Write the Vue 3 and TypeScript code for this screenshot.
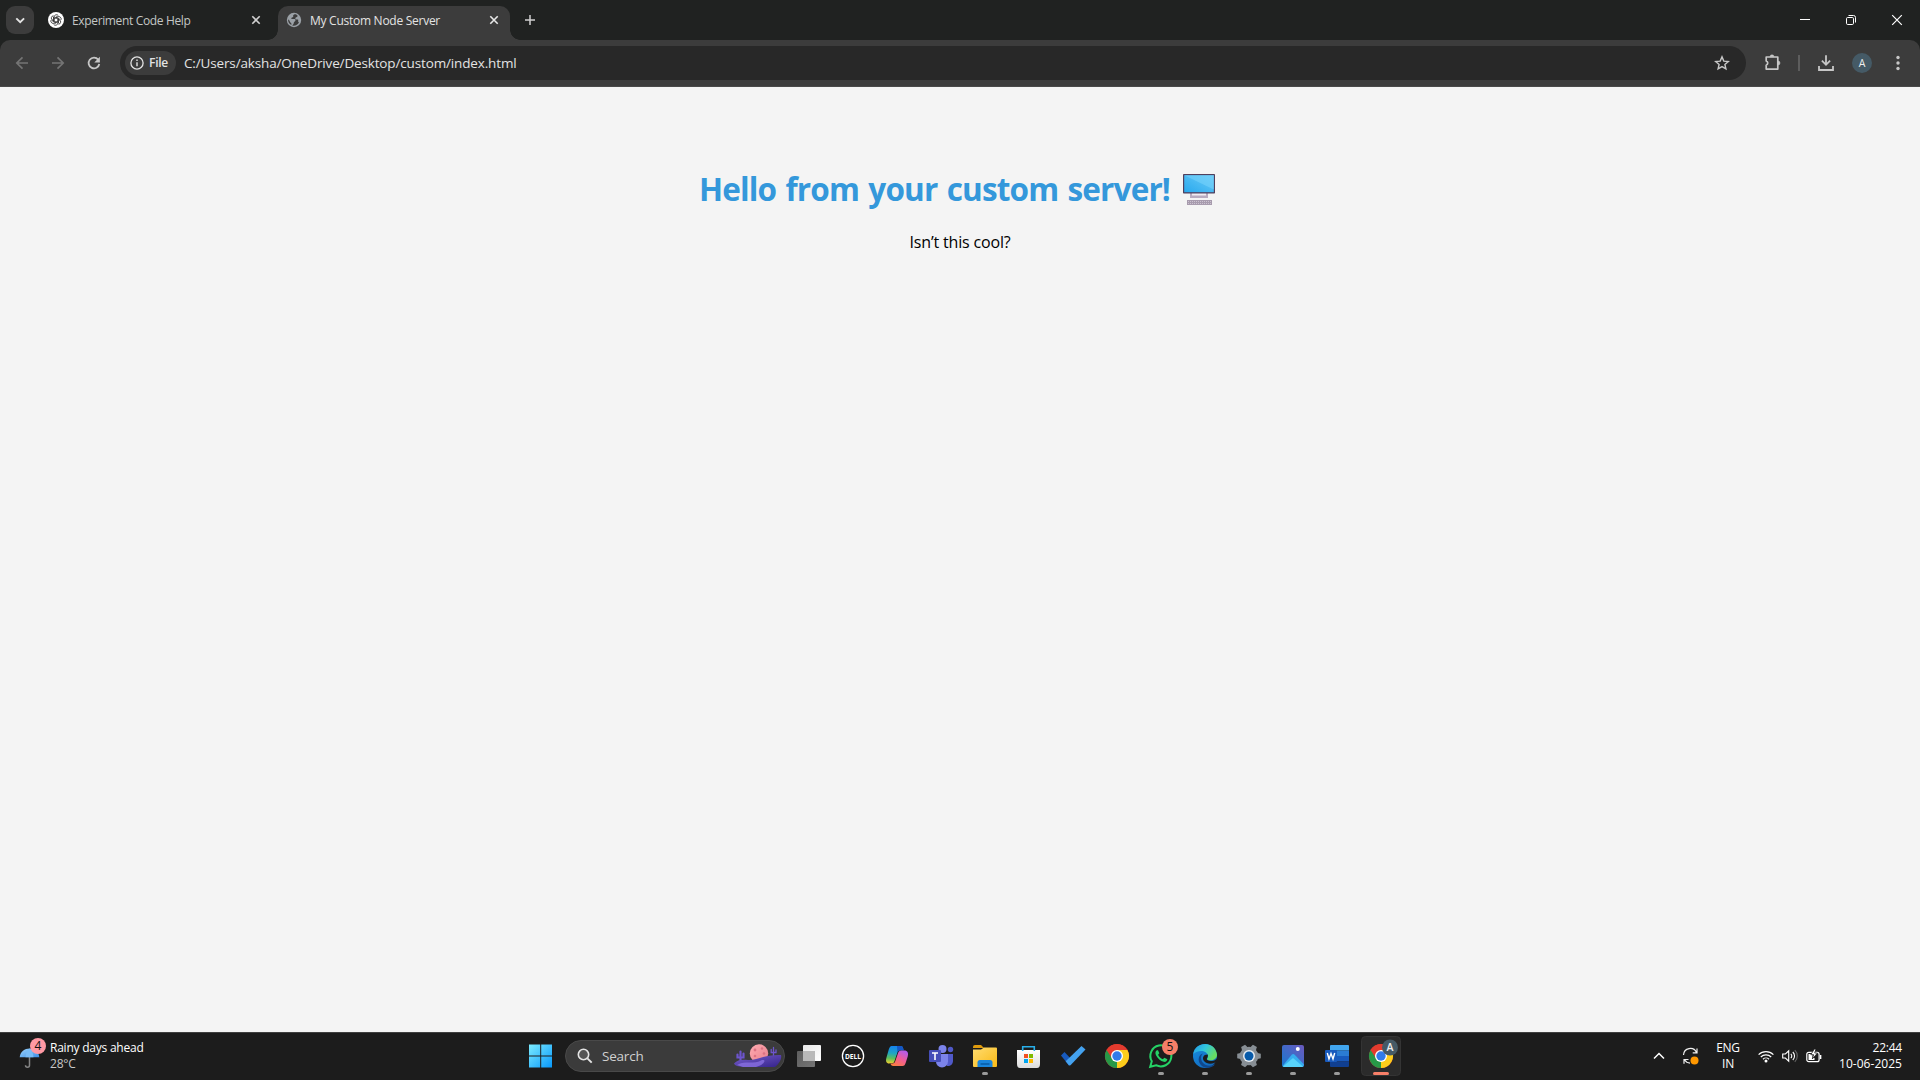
<script setup lang="ts">
import type { Directive } from 'vue'

// Tracks a single line of text out (or in) so that it fills the given width.
const vFit: Directive<HTMLElement, number> = {
  mounted(el, binding) {
    const apply = () => {
      el.style.letterSpacing = '0px'
      const count = (el.textContent ?? '').trim().length
      const natural = el.getBoundingClientRect().width
      el.style.letterSpacing = `${(binding.value - natural) / count}px`
    }
    apply()
    document.fonts.ready.then(apply)
  },
}

const gearTeeth = [0, 60, 120, 180, 240, 300]
</script>

<template>
  <div class="screen">
    <header class="tabstrip">
      <button class="tabsearch" aria-label="Search tabs">
        <svg width="28" height="28" viewBox="0 0 28 28"><path d="M10.3 12.3l3.9 3.9 3.9-3.9" fill="none" stroke="#e3e3e3" stroke-width="1.9" /></svg>
      </button>
      <div class="tab idle">
        <svg class="fav" width="16" height="16" viewBox="0 0 16 16">
          <circle cx="8" cy="8" r="8" fill="#fff" />
          <g fill="none" stroke="#222" stroke-width=".75">
            <path v-for="a in gearTeeth" :key="a" :transform="`rotate(${a} 8 8)`" d="M6.2 9V4.9a2.3 2.3 0 0 1 4.2-1.2M6.2 6.2l3.4-2" />
          </g>
        </svg>
        <span class="title"><span v-fit="118.5">Experiment Code Help</span></span>
        <svg class="close" width="10" height="10" viewBox="0 0 10 10"><path d="M1.300 1.300l7.400 7.400M8.700 1.300L1.300 8.700" stroke="#d0d0d0" stroke-width="1.600" /></svg>
      </div>
      <div class="tab active">
        <svg class="fav" width="16" height="16" viewBox="0 0 16 16">
          <circle cx="8" cy="8" r="7.200" fill="#9aa0a6" />
          <path d="M8.500 2.200c-1 .5-1.500 1-1.300 1.900.2.800-.2 1.300-1.100 1.400-.8.200-1 .8-.5 1.400l2.900.2c1.400.1 1.300 1.600.5 2.200l-.6.400c-.8.600-.4 1.300-.8 2.100-.3.700-1 1-1.200 1.900 2.900.5 5.600-1.100 6.600-3.500-.9-.1-1-1-.800-1.700.3-.9-.3-1.200-1.200-1-1.500.2-2.200-.9-1.300-1.900.7-.8 1.700-.6 2-1.700C11.200 2.700 9.900 2 8.500 2.200zM2.100 7.300c-.3 2.500 1.200 4.800 3.300 5.600.2-1.300-.2-1.900-.9-2.300-.8-.5-.5-1.600-1.100-2.200z" fill="#3c3c3c" />
        </svg>
        <span class="title"><span v-fit="130">My Custom Node Server</span></span>
        <svg class="close" width="10" height="10" viewBox="0 0 10 10"><path d="M1.300 1.300l7.400 7.400M8.700 1.300L1.300 8.700" stroke="#e8e8e8" stroke-width="1.600" /></svg>
      </div>
      <svg class="newtab" width="10" height="10" viewBox="0 0 10 10"><path d="M5 0v10M0 5h10" stroke="#d0d0d0" stroke-width="1.500" /></svg>
      <div class="winbtns">
        <svg width="46" height="40" viewBox="0 0 46 40"><path d="M18 19.500h10" stroke="#fff" /></svg>
        <svg width="46" height="40" viewBox="0 0 46 40"><g fill="none" stroke="#fff"><rect x="18.500" y="17.500" width="7" height="7" rx="1.200" /><path d="M20.500 15.500h5a2 2 0 0 1 2 2v5" /></g></svg>
        <svg width="46" height="40" viewBox="0 0 46 40"><path d="M18.200 15.200l9.600 9.600M27.800 15.200l-9.600 9.600" stroke="#fff" stroke-width="1.200" /></svg>
      </div>
    </header>

    <div class="toolbarwrap">
      <nav class="toolbar">
        <svg class="nav" width="36" height="36" viewBox="0 0 36 36"><path d="M28 18H17M22.500 12.300L16.800 18l5.700 5.700" fill="none" stroke="#747474" stroke-width="1.700" /></svg>
        <svg class="nav" width="36" height="36" viewBox="0 0 36 36"><path d="M16 18h11M21.500 12.300l5.700 5.700-5.700 5.700" fill="none" stroke="#747474" stroke-width="1.700" /></svg>
        <svg class="nav" width="36" height="36" viewBox="0 0 36 36"><path d="M26.200 14.600A5.400 5.400 0 1 0 27.300 19" fill="none" stroke="#c7c7c7" stroke-width="1.800" /><path d="M27.900 11.800v5.600h-5.600z" fill="#c7c7c7" /></svg>
        <div class="omnibox">
          <div class="chip">
            <svg width="14" height="14" viewBox="0 0 14 14"><circle cx="7" cy="7" r="6.100" fill="none" stroke="#e3e3e3" stroke-width="1.300" /><path d="M7 6.200v4M7 3.600v1.500" stroke="#e3e3e3" stroke-width="1.400" /></svg>
            <b><span v-fit="19">File</span></b>
          </div>
          <span class="url"><span v-fit="332.5">C:/Users/aksha/OneDrive/Desktop/custom/index.html</span></span>
          <svg class="star" width="16" height="16" viewBox="0 0 16 16"><path d="M8 1.900l1.800 4.200 4.500.4-3.400 3 1 4.400L8 11.600l-3.900 2.300 1-4.400-3.400-3 4.500-.4z" fill="none" stroke="#c7c7c7" stroke-width="1.400" /></svg>
        </div>
        <div class="actions">
          <svg width="18" height="18" viewBox="0 0 18 18"><path d="M2.200 3h11.600v12.100H2.200v-3.900a2.200 2.200 0 0 0 0-4.200z" fill="none" stroke="#c7c7c7" stroke-width="1.700" stroke-linejoin="round" /><path d="M6 2.800a2 2 0 0 1 4 0zM14 7a2 2 0 0 1 0 4z" fill="#c7c7c7" stroke="#c7c7c7" stroke-width=".5" /></svg>
          <i class="divider"></i>
          <svg class="dl" width="16" height="16" viewBox="0 0 16 16"><path d="M8 .300v9M3.900 5.700L8 9.800l4.100-4.100M1 11v4h14v-4" fill="none" stroke="#c7c7c7" stroke-width="1.800" /></svg>
          <span class="avatar">A</span>
          <svg class="dots" width="4" height="16" viewBox="0 0 4 16" fill="#c7c7c7"><circle cx="2" cy="2.500" r="1.700" /><circle cx="2" cy="8" r="1.700" /><circle cx="2" cy="13.500" r="1.700" /></svg>
        </div>
      </nav>
    </div>

    <main class="page">
      <h1>
        <span v-fit="471">Hello from your custom server!</span>
        <svg class="pc" width="34" height="34" viewBox="0 0 34 34">
          <defs><linearGradient id="pcScreen" x1="0" y1="1" x2="1" y2="0"><stop offset="0" stop-color="#29a9ee" /><stop offset="1" stop-color="#6bcbf7" /></linearGradient></defs>
          <path d="M8 20h18v5H8z" fill="#b8acc0" /><path d="M10 20h14v2.500H10z" fill="#f0edf2" />
          <rect x="1" y="1" width="32" height="19.500" rx=".7" fill="#50405e" />
          <rect x="2.200" y="2.200" width="29.600" height="17" fill="url(#pcScreen)" />
          <path d="M2.200 2.200L31.800 16.500V2.200z" fill="#79d4fb" opacity=".55" />
          <rect x="5" y="27" width="25" height="5" fill="#a79bad" /><path d="M6 28.500h23M6 30.500h23" stroke="#cbc2d0" stroke-dasharray="1 1" />
        </svg>
      </h1>
      <p><span v-fit="101">Isn’t this cool?</span></p>
    </main>

    <footer class="taskbar">
      <div class="weather">
        <svg width="28" height="36" viewBox="0 0 28 36">
          <defs><linearGradient id="umb" x1="0" y1="0" x2="1" y2="1"><stop offset="0" stop-color="#9bd3fb" /><stop offset="1" stop-color="#3d8fe8" /></linearGradient></defs>
          <path d="M10.500 19v8.200a2 2 0 0 1-4 0" fill="none" stroke="#858585" stroke-width="1.500" />
          <path d="M.7 19.200C1.500 7.500 19.500 7.500 20.300 19.200z" fill="url(#umb)" /><path d="M6.500 19.200c.3-4 1.500-7 4-8.700 2.500 1.700 3.700 4.700 4 8.700" fill="#79bdf7" />
          <circle cx="19" cy="8" r="8" fill="#ff99a4" />
          <text x="19" y="12.300" text-anchor="middle" font-size="12" fill="#111">4</text>
        </svg>
        <div class="wtext"><div><span v-fit="93.5">Rainy days ahead</span></div><div class="temp"><span v-fit="25.5">28°C</span></div></div>
      </div>
      <svg class="start" width="24" height="24" viewBox="0 0 24 24">
        <defs><linearGradient id="win" x1="0" y1="0" x2="1" y2="1"><stop offset="0" stop-color="#7cecff" /><stop offset="1" stop-color="#0898fb" /></linearGradient></defs>
        <path d="M0 .500h11.200v11H0zM12.200 .500H23v11H12.200zM0 12.500h11.200v11H0zM12.200 12.500H23v11H12.200z" fill="url(#win)" />
      </svg>
      <div class="search">
        <svg width="16" height="16" viewBox="0 0 16 16"><circle cx="6.500" cy="6.500" r="5.200" fill="#555" stroke="#e4e4e4" stroke-width="1.600" /><path d="M10.400 10.400l4.300 4.300" stroke="#e4e4e4" stroke-width="1.900" /></svg>
        <span class="stext"><span v-fit="41.5">Search</span></span>
        <svg class="scene" width="50" height="28" viewBox="0 0 50 28">
          <defs><linearGradient id="hill" x1="0" y1="0" x2="1" y2="1"><stop offset="0" stop-color="#7a61ce" /><stop offset="1" stop-color="#34228a" /></linearGradient><linearGradient id="moon" x1="0" y1="0" x2="1" y2="1"><stop offset="0" stop-color="#ffabb1" /><stop offset="1" stop-color="#e8808c" /></linearGradient></defs>
          <g fill="none" stroke="#6d55cd" stroke-linecap="round"><path d="M7.500 20V9.500M4.500 12.500v3h6v-4" stroke-width="2.200" /><path d="M40.500 15V5.500M38.200 7.500v3h4.800v-2.500" stroke-width="1.300" /></g>
          <circle cx="26" cy="11.500" r="9.200" fill="url(#moon)" />
          <g fill="#dc7283"><circle cx="22" cy="8" r="1.400" /><circle cx="29" cy="6.500" r="1.200" /><circle cx="22" cy="14" r="1.300" /><circle cx="31" cy="11.500" r="1.300" /></g>
          <path d="M1 21.500c4-4.500 9-4 14-3.500 9 .5 15-5.500 33-5 1 3-1 8-6 12H10C5 24.500 2 24 1 21.500z" fill="url(#hill)" />
          <path d="M4 23c8-5 17 0 25-5 5-1 2 5-6 7H10z" fill="#8d74e4" opacity=".75" />
        </svg>
      </div>
      <div class="apps">
        <svg class="app" viewBox="0 0 44 48">
          <defs><linearGradient id="tvW" x1="0" y1="0" x2="1" y2="1"><stop offset="0" stop-color="#e8e8e8" /><stop offset="1" stop-color="#fff" /></linearGradient><linearGradient id="tvG" x1="0" y1="0" x2="1" y2="1"><stop offset="0" stop-color="#5e5e5e" /><stop offset="1" stop-color="#757575" /></linearGradient></defs>
          <rect x="10" y="19" width="18" height="16" rx="1" fill="url(#tvG)" /><rect x="16" y="13" width="18" height="16" rx="1" fill="url(#tvW)" /><path d="M16 19h12v10H16z" fill="#b9b9b9" />
        </svg>
        <svg class="app" viewBox="0 0 44 48">
          <circle cx="22" cy="24" r="10.600" fill="none" stroke="#fff" stroke-width="1.300" />
          <text x="22" y="26.700" text-anchor="middle" font-size="7.500" font-weight="700" fill="#fff" textLength="16" lengthAdjust="spacingAndGlyphs">DELL</text>
        </svg>
        <svg class="app" viewBox="0 0 44 48">
          <defs>
            <linearGradient id="coA" x1=".3" y1="0" x2=".2" y2="1"><stop offset="0" stop-color="#1583ee" /><stop offset=".4" stop-color="#1fa5c4" /><stop offset=".7" stop-color="#5cc05b" /><stop offset="1" stop-color="#f3d02e" /></linearGradient>
            <linearGradient id="coB" x1=".8" y1="0" x2=".2" y2="1"><stop offset="0" stop-color="#b05cf0" /><stop offset=".5" stop-color="#f05c96" /><stop offset="1" stop-color="#fb7f3c" /></linearGradient>
          </defs>
          <path d="M16.500 14h9.300c1.700 0 2.300 1.400 2.800 4.500h-3c-2 0-2.600 1-3.200 3l-2 7c-.6 2-1.400 3-3.400 3h-2.500c-3.500 0-4-2.500-3-6l2.200-7.700c.6-2.500 1.800-3.800 2.800-3.800z" fill="url(#coA)" />
          <path d="M22 14h4c1.600 0 2.200 1.400 2.800 4.500h-3.500c-1.400 0-2.200.8-2.900 2.500z" fill="#1557c4" />
          <path d="M27.500 34h-9.300c-1.700 0-2.300-1-2.800-2.500h1.900c2 0 2.600-1 3.200-3l2.400-7c.6-2 1.400-3 3.400-3h2.900c3.500 0 4.500 2.500 3.500 6l-2 6.200c-.6 2-1.300 3.300-3.300 3.300z" fill="#1c1c1c" transform="translate(-.8 0)" />
          <path d="M27.500 34h-9.300c-1.700 0-2.300-1-2.800-2.500h1.900c2 0 2.600-1 3.200-3l2.400-7c.6-2 1.400-3 3.400-3h2.900c3.500 0 4.500 2.500 3.500 6l-2 6.200c-.6 2-1.300 3.300-3.300 3.300z" fill="url(#coB)" />
        </svg>
        <svg class="app" viewBox="0 0 44 48">
          <circle cx="31.500" cy="17.500" r="2.700" fill="#5059c9" /><path d="M27 22h7v7c0 3.500-3 5.500-6 5z" fill="#5059c9" />
          <circle cx="23.500" cy="17" r="4" fill="#7b83eb" /><path d="M17 22h12v7.500a6 6 0 0 1-12 0z" fill="#7b83eb" />
          <rect x="10" y="18" width="12" height="12" rx="1" fill="#464eb8" /><path d="M13 21h6M16 21v7" stroke="#fff" stroke-width="1.600" />
        </svg>
        <svg class="app" viewBox="0 0 44 48">
          <defs><linearGradient id="fold" x1="0" y1="0" x2="1" y2="1"><stop offset="0" stop-color="#ffdc70" /><stop offset="1" stop-color="#f9b915" /></linearGradient></defs>
          <path d="M10 15q0-2 2-2h6l3 3H10z" fill="#e09b0c" /><path d="M10 17.500h8l3-2h12q1 0 1 1V34q0 1-1 1H11q-1 0-1-1z" fill="url(#fold)" />
          <path d="M14.500 35v-4.500q0-2.500 2.500-2.500h10q2.500 0 2.500 2.500V35z" fill="#1a85dc" /><path d="M17.500 32h9" stroke="#075ba6" stroke-width="1.500" /><rect class="ind" x="19" y="40" width="6" height="3" rx="1.500" />
        </svg>
        <svg class="app" viewBox="0 0 44 48">
          <defs><linearGradient id="bag" x1="0" y1="0" x2="0" y2="1"><stop offset="0" stop-color="#fff" /><stop offset="1" stop-color="#dcdcdc" /></linearGradient></defs>
          <path d="M10 18h23v14q0 4-3 4H13q-3 0-3-4z" fill="url(#bag)" /><path d="M15.700 19v-4.200h11.600V19" fill="none" stroke="#28afea" stroke-width="1.600" />
          <path d="M17 22h4v4h-4z" fill="#f25022" /><path d="M22 22h4v4h-4z" fill="#7fba00" /><path d="M17 27h4v4h-4z" fill="#00a4ef" /><path d="M22 27h4v4h-4z" fill="#ffb900" />
        </svg>
        <svg class="app" viewBox="0 0 44 48"><path d="M10 23.500l3.500-3.500 8 8.500-3.500 5z" fill="#185abd" /><path d="M18 33.500l-3.300-4.300L30.500 14l4 3.600-15 15.700z" fill="#44a2ef" /></svg>
        <svg class="app" viewBox="0 0 44 48">
          <g id="chromeMark"><circle cx="22" cy="24" r="12" fill="#e33b2e" /><path d="M22 24L11.600 18A12 12 0 0 0 22 36l5.500-9z" fill="#279847" /><path d="M22 24v12a12 12 0 0 0 10.400-18H22z" fill="#fdcd1b" /><path d="M11.600 18A12 12 0 0 1 32.400 18H22l-5 8.500z" fill="#e33b2e" /><circle cx="22" cy="24" r="6" fill="#fff" /><circle cx="22" cy="24" r="4.700" fill="#317be9" /></g>
        </svg>
        <svg class="app" viewBox="0 0 44 48">
          <path d="M11.200 34.800l1.600-5.600a10.500 10.500 0 1 1 4.200 4z" fill="none" stroke="#25d366" stroke-width="2" />
          <path d="M18 18.300c-1.700.8-2 3-1 5 1.700 3.400 4.500 5.700 7.800 6.500 1.600.4 3.300-.5 3.600-2.500l-3-1.600-1.600 1.600c-2-.8-3.800-2.400-4.700-4.500l1.200-1.500-1.300-3z" fill="#25d366" />
          <circle cx="31" cy="15" r="8" fill="#f77f68" /><text x="31" y="19.300" text-anchor="middle" font-size="12" fill="#111">5</text><rect class="ind" x="19" y="40" width="6" height="3" rx="1.500" />
        </svg>
        <svg class="app" viewBox="0 0 44 48">
          <defs><linearGradient id="edA" x1="0" y1="0" x2="1" y2=".5"><stop offset="0" stop-color="#2196e8" /><stop offset=".5" stop-color="#31c6dc" /><stop offset="1" stop-color="#68dc61" /></linearGradient><linearGradient id="edB" x1="0" y1="0" x2=".7" y2="1"><stop offset="0" stop-color="#188fe0" /><stop offset="1" stop-color="#1168bd" /></linearGradient></defs>
          <circle cx="22" cy="24" r="12" fill="url(#edB)" />
          <path d="M10.200 22C12 9 32 8 34 22.500c.3 5-5.500 6.800-9.500 5.300-1.300-.6.800-1.500.5-4-.7-5.300-9.500-6.500-14.800-1.800z" fill="url(#edA)" />
          <path d="M20.200 21.500c-2 1-3.200 5.500-.5 9 3 4 9 4 12.600 1.500C29 37 21 37 17.500 32.500c-3.500-4.500-1.500-10.500 2.700-11z" fill="#10488d" />
          <path d="M24.700 22.500c1 2.800-2 4-.3 5.500 2.500 2 7.600 1.200 9.600-1.500l-.5 3c-1.500 2-9 4-12.500-.5-2-2.800-1-6.500 3.700-6.500z" fill="#1c1c1c" />
          <rect class="ind" x="19" y="40" width="6" height="3" rx="1.500" />
        </svg>
        <svg class="app" viewBox="0 0 44 48">
          <circle cx="22" cy="24" r="9.300" fill="#878e94" /><path v-for="a in gearTeeth" :key="a" :transform="`rotate(${a + 30} 22 24)`" d="M18.700 16.500l1-4.300h4.600l1 4.300z" fill="#878e94" />
          <circle cx="22" cy="24" r="6" fill="#e7edf3" /><circle cx="22" cy="24" r="4.500" fill="#075aa9" /><rect class="ind" x="19" y="40" width="6" height="3" rx="1.500" />
        </svg>
        <svg class="app" viewBox="0 0 44 48">
          <defs><linearGradient id="pho" x1="0" y1="1" x2="1" y2="0"><stop offset="0" stop-color="#1778d1" /><stop offset="1" stop-color="#6b59bd" /></linearGradient></defs>
          <rect x="11" y="13" width="22" height="22" rx="2" fill="url(#pho)" /><path d="M11.500 34l9.200-11.200q1.500-1.400 3 0L33 32.500q-.2 2.500-2 2.500H13z" fill="#36adef" /><path d="M12 34.500L22 26l10 8.500-1 .5H13z" fill="#58d3fa" /><circle cx="26.800" cy="17" r="2" fill="#fff" /><rect class="ind" x="19" y="40" width="6" height="3" rx="1.500" />
        </svg>
        <svg class="app" viewBox="0 0 44 48">
          <path d="M15 18.500V14q0-1 1-1h17q1 0 1 1v4.500z" fill="#41a5ee" /><path d="M15 18.500h19V24H15z" fill="#2b7cd3" /><path d="M15 24h19v5.500H15z" fill="#185abd" /><path d="M15 29.500h19V34q0 1-1 1H16q-1 0-1-1z" fill="#103f91" />
          <rect x="10" y="18" width="12" height="12" rx="1" fill="#185abd" /><path d="M12.300 21l1.700 6 2-5.500 2 5.500 1.700-6" fill="none" stroke="#fff" stroke-width="1.400" /><rect class="ind" x="19" y="40" width="6" height="3" rx="1.500" />
        </svg>
        <svg class="app" viewBox="0 0 44 48">
          <rect x="2.500" y="4.500" width="39" height="39" rx="4" fill="#2b2b2b" stroke="#343434" /><use href="#chromeMark" />
          <circle cx="31" cy="15.500" r="8" fill="#455a66" /><text x="31" y="19.300" text-anchor="middle" font-size="10.500" font-weight="600" fill="#eee">A</text><rect x="14" y="40" width="16" height="3" rx="1.500" fill="#f77f68" />
        </svg>
      </div>
      <div class="tray">
        <svg width="12" height="8" viewBox="0 0 12 8"><path d="M1 6.500l5-5 5 5" fill="none" stroke="#fff" stroke-width="1.500" /></svg>
        <svg class="sync" width="18" height="18" viewBox="0 0 18 18"><path d="M1.500 8A6.800 6.800 0 0 1 14.500 5.500M15 1.500v4.300h-4.300M2 16.800v-4.300h4.500M2.500 12.800q2 3.200 5.500 3.400" fill="none" stroke="#f0f0f0" stroke-width="1.200" /><circle cx="12.500" cy="13.500" r="4" fill="#ff9800" /></svg>
        <div class="lang"><div><span v-fit="23.5">ENG</span></div><div><span v-fit="12">IN</span></div></div>
        <svg class="wifi" width="16" height="13" viewBox="0 0 16 13"><g fill="none" stroke="#fff" stroke-width="1.200"><path d="M.6 4.600a10.500 10.500 0 0 1 14.800 0M2.800 7a7.400 7.400 0 0 1 10.400 0M5 9.200a4.300 4.300 0 0 1 6 0" /></g><circle cx="8" cy="11" r="1.500" fill="#fff" /></svg>
        <svg class="vol" width="16" height="14" viewBox="0 0 16 14"><g fill="none" stroke="#fff" stroke-width="1.100"><path d="M.7 5v4h2.700l3.300 3.200V1.800L3.400 5zM8.800 4.800a3 3 0 0 1 0 4.400M10.800 3a5.500 5.500 0 0 1 0 8" /><path d="M12.800 1.200a8 8 0 0 1 0 11.600" stroke="#666" /></g></svg>
        <svg class="bat" width="16" height="14" viewBox="0 0 16 14"><rect x=".8" y="3.300" width="12.300" height="9.400" rx="2" fill="none" stroke="#fff" stroke-width="1.200" /><path d="M2.500 5h4v6h-4zM6 9h2.500v2H6z" fill="#fff" /><path d="M14.600 6v4" stroke="#fff" stroke-width="1.500" /><path d="M8.300 0L4.800 5.700h2.800L6.300 10l5.200-6H8.700L10 0z" fill="#fff" stroke="#1c1c1c" stroke-width=".8" /></svg>
        <div class="clock"><div><span v-fit="29.5">22:44</span></div><div><span v-fit="63">10-06-2025</span></div></div>
      </div>
    </footer>
  </div>
</template>

<style>
html, body { margin: 0; background: #f4f4f4; }
</style>

<style scoped>
.screen { width: 1920px; height: 1080px; display: flex; flex-direction: column; overflow: hidden; font-family: "Open Sans", "Noto Sans", sans-serif; background: #f4f4f4; }
svg { display: block; flex: none; }
span { white-space: nowrap; }
.tabstrip { height: 40px; background: #202221; display: flex; align-items: center; flex: none; }
.tabsearch { width: 28px; height: 28px; margin: 0 0 0 6px; padding: 0; border: 0; border-radius: 9px; background: #3c3c3c; }
.tab { display: flex; align-items: center; box-sizing: border-box; font-size: 12px; }
.idle { width: 244px; padding-left: 14px; color: #c4c7c5; }
.title { width: 179px; margin-left: 8px; padding-top: 2px; line-height: 20px; }
.active { position: relative; align-self: flex-end; height: 34px; width: 232px; background: #3c3c3c; border-radius: 10px 10px 0 0; color: #e3e3e3; padding: 0 0 6px 8px; }
.active::before, .active::after { content: ""; position: absolute; bottom: 0; width: 10px; height: 10px; }
.active::before { left: -10px; background: radial-gradient(circle at 0 0, transparent 9.500px, #3c3c3c 10px); }
.active::after { right: -10px; background: radial-gradient(circle at 100% 0, transparent 9.500px, #3c3c3c 10px); }
.newtab { margin-left: 15px; }
.winbtns { display: flex; margin-left: auto; }
.toolbarwrap { background: #202221; flex: none; }
.toolbar { height: 47px; box-sizing: border-box; border-bottom: 1px solid #494949; background: #3c3c3c; border-radius: 10px 10px 0 0; display: flex; align-items: center; }
.omnibox { width: 1626px; height: 34px; margin-left: 12px; border-radius: 17px; background: #282828; display: flex; align-items: center; box-sizing: border-box; padding-left: 5px; }
.chip { width: 51px; height: 24px; border-radius: 12px; background: #3c3c3c; display: flex; align-items: center; padding-left: 5px; box-sizing: border-box; color: #e3e3e3; font-size: 12px; line-height: 20px; }
.chip b { margin-left: 5px; font-weight: 600; }
.url { margin-left: 8px; font-size: 13.500px; color: #e3e3e3; line-height: 20px; }
.star { margin: 0 16px 0 auto; }
.actions { display: flex; align-items: center; margin-left: 18px; }
.divider { width: 2px; height: 16px; background: #5d5d5d; margin-left: 16px; }
.dl { margin-left: 18px; }
.avatar { width: 20px; height: 20px; border-radius: 50%; background: #455a66; color: #eee; font-size: 10.500px; font-weight: 500; line-height: 20px; text-align: center; margin-left: 18px; }
.dots { margin-left: 24px; }
.page { height: 945px; background: #f4f4f4; display: flex; flex-direction: column; align-items: center; flex: none; }
h1 { margin: 80px 0 0; height: 43px; line-height: 43px; font-size: 31.500px; word-spacing: 2px; font-weight: 700; color: #3498db; display: flex; width: 522px; }
.pc { margin: 6px 0 0 12px; }
p { margin: 21px 0 0; font-size: 16px; line-height: 22px; color: #000; }
.taskbar { height: 48px; flex: none; background: linear-gradient(#3f3f3f 1px, #1c1c1c 1px); display: flex; align-items: center; }
.weather { width: 529px; height: 48px; display: flex; box-sizing: border-box; padding: 6px 0 0 19px; color: #fff; font-size: 12px; line-height: 16px; }
.weather svg { overflow: visible; }
.wtext { margin: 2px 0 0 3px; }
.temp { color: #c8c8c8; }
.search { width: 220px; height: 32px; box-sizing: border-box; border-radius: 16px; background: #3b3b3b; border: 1px solid #494949; margin-left: 12px; display: flex; align-items: center; padding-left: 11px; }
.stext { margin-left: 9px; color: #d0d0d0; font-size: 13.500px; line-height: 20px; }
.scene { margin: 0 1px 0 auto; }
.apps { display: flex; margin-left: 2px; }
.app { width: 44px; height: 48px; }
.ind { fill: #9a9a9a; }
.tray { display: flex; align-items: center; margin-left: auto; padding-right: 18px; color: #fff; font-size: 12px; line-height: 16px; }
.sync { margin-left: 17px; }
.lang { width: 24px; text-align: center; margin-left: 16px; }
.wifi { margin-left: 18px; }
.vol { margin-left: 8px; }
.bat { margin-left: 8px; }
.clock { width: 63px; margin-left: 17px; text-align: right; display: flex; flex-direction: column; align-items: flex-end; }
</style>
